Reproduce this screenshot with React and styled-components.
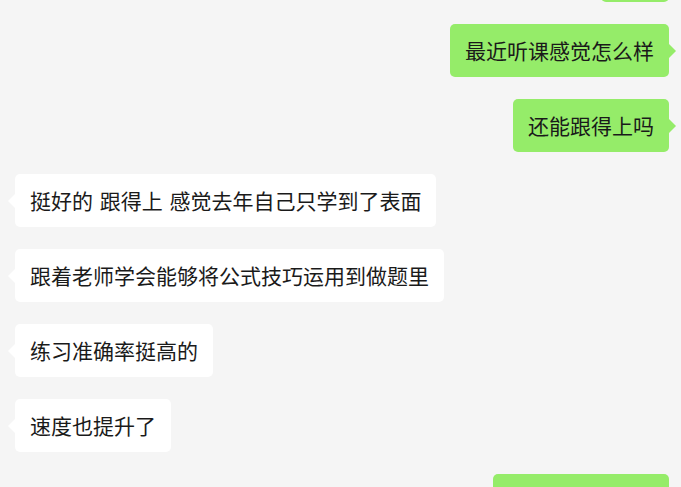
import React from 'react'
import styled, { createGlobalStyle } from 'styled-components'

const GlobalStyle = createGlobalStyle`
	html, body {
		margin: 0;
		padding: 0;
		background: #f5f5f5;
		overflow: hidden;
	}
	body {
		font-family: "Noto Sans CJK SC", "Noto Sans", sans-serif;
	}
`

const Chat = styled.div`
	display: flex;
	flex-direction: column;
	gap: 22px;
	margin-top: -51px;
	padding: 0 12px 0 15px;
`

const Row = styled.div`
	display: flex;
	justify-content: ${(p) => (p.$mine ? 'flex-end' : 'flex-start')};
`

const Bubble = styled.div`
	position: relative;
	box-sizing: border-box;
	height: 53px;
	${(p) => (p.$width ? `width: ${p.$width}px;` : '')}
	padding: 13px 15px;
	border-radius: 5px;
	background: ${(p) => (p.$mine ? '#95ec69' : '#ffffff')};
	color: #1a1a1a;
	font-size: 21px;
	line-height: 27px;
	word-spacing: 2px;
	white-space: pre;

	&::after {
		content: '';
		position: absolute;
		top: 20px;
		${(p) => (p.$mine ? 'right: -7px;' : 'left: -7px;')}
		width: 0;
		height: 0;
		border-top: 7px solid transparent;
		border-bottom: 7px solid transparent;
		${(p) =>
			p.$mine
				? 'border-left: 7px solid #95ec69;'
				: 'border-right: 7px solid #ffffff;'}
	}
`

// the first and last bubbles are cut off by the window, only their edge shows
const messages = [
	{ mine: true, text: '', width: 68 },
	{ mine: true, text: '最近听课感觉怎么样' },
	{ mine: true, text: '还能跟得上吗' },
	{ mine: false, text: '挺好的 跟得上 感觉去年自己只学到了表面' },
	{ mine: false, text: '跟着老师学会能够将公式技巧运用到做题里' },
	{ mine: false, text: '练习准确率挺高的' },
	{ mine: false, text: '速度也提升了' },
	{ mine: true, text: '', width: 176 }
]

export default function App () {
	return (
		<>
			<GlobalStyle />
			<Chat>
				{messages.map((m, i) => (
					<Row key={i} $mine={m.mine}>
						<Bubble $mine={m.mine} $width={m.width}>
							{m.text}
						</Bubble>
					</Row>
				))}
			</Chat>
		</>
	)
}
